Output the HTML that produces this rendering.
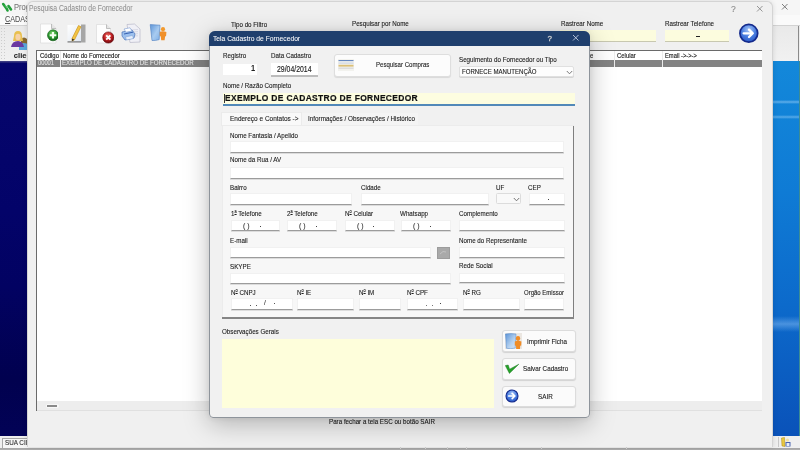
<!DOCTYPE html><html><head><meta charset="utf-8"><style>
*{box-sizing:border-box;margin:0;padding:0}
html,body{width:800px;height:450px;overflow:hidden}
body{position:relative;background:#f0f0f0;font-family:"Liberation Sans",sans-serif}
.a{position:absolute}
.t{position:absolute;white-space:nowrap;filter:grayscale(1)}
</style></head><body>
<div class="a" style="left:0px;top:0px;width:800.00px;height:15.00px;background:#f6f6f6"></div>
<div class="a" style="left:0px;top:15px;width:800.00px;height:10.00px;background:#fafafa"></div>
<div class="a" style="left:0px;top:25px;width:800.00px;height:1.00px;background:#d2d2d2"></div>
<div class="a" style="left:0px;top:26px;width:800.00px;height:35.00px;background:linear-gradient(#e9e9e9,#f1f1f1)"></div>
<div class="a" style="left:798px;top:26px;width:1.00px;height:35.00px;background:#8a8a8a"></div>
<div class="a" style="left:0px;top:61px;width:30.00px;height:375.00px;background:linear-gradient(180deg,#4a4a86 0px,#06066c 2.5px,#030369 40%,#020262 60%,#01014f 85%,#020256)"></div>
<div class="a" style="left:773px;top:61px;width:26.00px;height:375.00px;background:linear-gradient(180deg,#1388da 0%,#0f7bd5 35%,#0c6acb 65%,#0a52b9 100%)"></div>
<div class="a" style="left:773px;top:100px;width:26.00px;height:4.00px;background:linear-gradient(180deg,rgba(255,255,255,0),rgba(170,215,250,.5),rgba(255,255,255,0))"></div>
<div class="a" style="left:773px;top:115px;width:26.00px;height:4.00px;background:linear-gradient(180deg,rgba(255,255,255,0),rgba(170,215,250,.45),rgba(255,255,255,0))"></div>
<div class="a" style="left:773px;top:316px;width:26.00px;height:16.00px;background:linear-gradient(180deg,rgba(255,255,255,0),rgba(150,200,250,.45),rgba(255,255,255,0))"></div>
<div class="a" style="left:799px;top:61px;width:1.00px;height:375.00px;background:#3b8c95"></div>
<div class="a" style="left:0px;top:436px;width:800.00px;height:11.00px;background:#efefef"></div>
<div class="a" style="left:2px;top:438px;width:26.00px;height:10.00px;background:#f6f6f6;border-left:1px solid #a8a8a8;border-top:1px solid #a8a8a8"></div>
<div class="t" style="left:4.6px;top:437.71px;font-size:7.6px;line-height:9.12px;color:#333;font-weight:400;-webkit-text-stroke:0.12px #333;transform:scaleX(0.83);transform-origin:0 0;">SUA CID</div>
<div class="a" style="left:778px;top:437px;width:1.00px;height:10.00px;background:#c8c8c8"></div>
<div class="a" style="left:0px;top:447.8px;width:800.00px;height:2.20px;background:linear-gradient(#a4a4a4,#b0b0b0)"></div>
<div class="a" style="left:400px;top:447px;width:1.00px;height:2.00px;background:#d4d4d4"></div>
<div class="a" style="left:425px;top:447px;width:1.00px;height:2.00px;background:#d4d4d4"></div>
<div class="a" style="left:447px;top:447px;width:1.00px;height:2.00px;background:#d4d4d4"></div>
<div class="a" style="left:466px;top:447px;width:1.00px;height:2.00px;background:#d4d4d4"></div>
<div class="a" style="left:509px;top:447px;width:1.00px;height:2.00px;background:#d4d4d4"></div>
<div class="a" style="left:541px;top:447px;width:1.00px;height:2.00px;background:#d4d4d4"></div>
<div class="a" style="left:626px;top:447px;width:1.00px;height:2.00px;background:#d4d4d4"></div>
<svg class="a" style="left:781px;top:437px" width="10" height="10" viewBox="0 0 10 10"><path d="M0.5 1 L3.5 0.5 L4 9.5 L1 9 Z" fill="#e8c840" stroke="#b08a10" stroke-width=".5"/><circle cx="6.5" cy="3" r="1.5" fill="#f2e0a0"/><path d="M4.5 5 H9.5 V9.5 H4.5 Z" fill="#4a64b0"/><path d="M5.5 6 H8.5 V9 H5.5 Z" fill="#e8eef8"/></svg>
<svg class="a" style="left:1px;top:1px" width="12" height="12" viewBox="0 0 12 12"><path d="M2.2 3 L5.5 7.5 L6.5 9.5 M7.5 5 L10 8.5" stroke="#22a03a" stroke-width="2.6" fill="none" stroke-linecap="round"/><path d="M4 4 L6 7" stroke="#6ad07a" stroke-width=".8"/></svg>
<div class="t" style="left:14px;top:1.86px;font-size:8.6px;line-height:10.32px;color:#70707c;font-weight:400;-webkit-text-stroke:0.05px #70707c;transform:scaleX(0.88);transform-origin:0 0;">Prog</div>
<div class="t" style="left:4.5px;top:14.25px;font-size:8.4px;line-height:10.08px;color:#505050;font-weight:400;-webkit-text-stroke:0.05px #505050;transform:scaleX(0.86);transform-origin:0 0;"><u>C</u>ADAS</div>
<svg class="a" style="left:781.25px;top:2.55px" width="7.5" height="7.5" viewBox="0 0 7.5 7.5"><path d="M1 1 L6.5 6.5 M6.5 1 L1 6.5" stroke="#6f6f6f" stroke-width="0.9"/></svg>
<div class="a" style="left:1px;top:28px;width:1.00px;height:1.00px;background:#cdcdcd"></div>
<div class="a" style="left:4px;top:28px;width:1.00px;height:1.00px;background:#cdcdcd"></div>
<div class="a" style="left:1px;top:31px;width:1.00px;height:1.00px;background:#cdcdcd"></div>
<div class="a" style="left:4px;top:31px;width:1.00px;height:1.00px;background:#cdcdcd"></div>
<div class="a" style="left:1px;top:34px;width:1.00px;height:1.00px;background:#cdcdcd"></div>
<div class="a" style="left:4px;top:34px;width:1.00px;height:1.00px;background:#cdcdcd"></div>
<div class="a" style="left:1px;top:37px;width:1.00px;height:1.00px;background:#cdcdcd"></div>
<div class="a" style="left:4px;top:37px;width:1.00px;height:1.00px;background:#cdcdcd"></div>
<div class="a" style="left:1px;top:40px;width:1.00px;height:1.00px;background:#cdcdcd"></div>
<div class="a" style="left:4px;top:40px;width:1.00px;height:1.00px;background:#cdcdcd"></div>
<div class="a" style="left:1px;top:43px;width:1.00px;height:1.00px;background:#cdcdcd"></div>
<div class="a" style="left:4px;top:43px;width:1.00px;height:1.00px;background:#cdcdcd"></div>
<div class="a" style="left:1px;top:46px;width:1.00px;height:1.00px;background:#cdcdcd"></div>
<div class="a" style="left:4px;top:46px;width:1.00px;height:1.00px;background:#cdcdcd"></div>
<div class="a" style="left:1px;top:49px;width:1.00px;height:1.00px;background:#cdcdcd"></div>
<div class="a" style="left:4px;top:49px;width:1.00px;height:1.00px;background:#cdcdcd"></div>
<div class="a" style="left:1px;top:52px;width:1.00px;height:1.00px;background:#cdcdcd"></div>
<div class="a" style="left:4px;top:52px;width:1.00px;height:1.00px;background:#cdcdcd"></div>
<div class="a" style="left:1px;top:55px;width:1.00px;height:1.00px;background:#cdcdcd"></div>
<div class="a" style="left:4px;top:55px;width:1.00px;height:1.00px;background:#cdcdcd"></div>
<div class="a" style="left:1px;top:58px;width:1.00px;height:1.00px;background:#cdcdcd"></div>
<div class="a" style="left:4px;top:58px;width:1.00px;height:1.00px;background:#cdcdcd"></div>
<svg class="a" style="left:10px;top:30px" width="18" height="20" viewBox="0 0 18 20">
<path d="M11 9 Q14 6 17 9 L18 14 L11 14 Z" fill="#8a6a30"/>
<path d="M9 14 Q13 12 18 14 V20 H9 Z" fill="#5aa6dc"/>
<path d="M4 6 Q4 1 8 1 Q12 1 12 6 L13 11 L3 11 Z" fill="#e8c050"/>
<ellipse cx="8" cy="7" rx="2.6" ry="3.2" fill="#f6d2a8"/>
<path d="M1 17 Q2 11 8 11 Q13 11 14 17 Z" fill="#6a3aa0"/>
</svg>
<div class="t" style="left:13.8px;top:51.21px;font-size:7.6px;line-height:9.12px;color:#222;font-weight:700;-webkit-text-stroke:0.05px #222;">clien</div>
<div class="a" style="left:27px;top:1px;width:746.00px;height:446.00px;background:#f0f0f0;border:1px solid #d4d4d4;border-bottom:none;border-radius:6px 6px 0 0;box-shadow:0 0 5px rgba(0,0,0,.12)"></div>
<div class="t" style="left:29px;top:3.74px;font-size:8.3px;line-height:9.96px;color:#8e8e8e;font-weight:400;-webkit-text-stroke:0.05px #8e8e8e;transform:scaleX(0.82);transform-origin:0 0;">Pesquisa Cadastro de Fornecedor</div>
<div class="t" style="left:731px;top:3.68px;font-size:9px;line-height:10.8px;color:#8a8a8a;font-weight:400;-webkit-text-stroke:0.1px #8a8a8a;transform:scaleX(0.95);transform-origin:0 0;">?</div>
<svg class="a" style="left:756.25px;top:5.25px" width="7.5" height="7.5" viewBox="0 0 7.5 7.5"><path d="M1 1 L6.5 6.5 M6.5 1 L1 6.5" stroke="#8a8a8a" stroke-width="0.9"/></svg>
<div class="t" style="left:231px;top:19.92px;font-size:7.9px;line-height:9.48px;color:#1c1c1c;font-weight:400;-webkit-text-stroke:0.12px #1c1c1c;transform:scaleX(0.79);transform-origin:0 0;">Tipo do Filtro</div>
<div class="t" style="left:352px;top:18.92px;font-size:7.9px;line-height:9.48px;color:#1c1c1c;font-weight:400;-webkit-text-stroke:0.12px #1c1c1c;transform:scaleX(0.79);transform-origin:0 0;">Pesquisar por Nome</div>
<div class="t" style="left:560.5px;top:18.92px;font-size:7.9px;line-height:9.48px;color:#1c1c1c;font-weight:400;-webkit-text-stroke:0.12px #1c1c1c;transform:scaleX(0.79);transform-origin:0 0;">Rastrear Nome</div>
<div class="t" style="left:665px;top:18.92px;font-size:7.9px;line-height:9.48px;color:#1c1c1c;font-weight:400;-webkit-text-stroke:0.12px #1c1c1c;transform:scaleX(0.79);transform-origin:0 0;">Rastrear Telefone</div>
<div class="a" style="left:560px;top:30px;width:96.00px;height:12.00px;background:#fcfcde;border-bottom:1px solid #c8c8b0"></div>
<div class="a" style="left:665px;top:30px;width:64.00px;height:12.00px;background:#fcfcde;border-bottom:1px solid #c8c8b0"></div>
<div class="a" style="left:696px;top:36.2px;width:4.00px;height:1.20px;background:#222"></div>
<svg class="a" style="left:737.5px;top:22.5px" width="22" height="21" viewBox="0 0 22 21">
<defs><radialGradient id="g1" cx="50%" cy="30%" r="70%"><stop offset="0" stop-color="#a6c6f6"/><stop offset=".55" stop-color="#4a7ee0"/><stop offset="1" stop-color="#2a5ac8"/></radialGradient></defs>
<circle cx="10.8" cy="10.3" r="8.9" fill="url(#g1)" stroke="#142a8c" stroke-width="1.7"/>
<path d="M5.6 10.3 H14.6 M11 6.6 L14.8 10.3 L11 14" stroke="#fff" stroke-width="2.3" fill="none" stroke-linecap="round" stroke-linejoin="round"/>
</svg>
<div class="a" style="left:36px;top:50px;width:726.00px;height:361.00px;background:#fff;border-left:1px solid #6a6a6a;border-top:1px solid #6a6a6a"></div>
<div class="a" style="left:37px;top:60px;width:725.00px;height:7.00px;background:#838383"></div>
<div class="a" style="left:60px;top:51px;width:1.00px;height:16.00px;background:#ebebeb"></div>
<div class="a" style="left:614px;top:51px;width:1.00px;height:16.00px;background:#ebebeb"></div>
<div class="a" style="left:662px;top:51px;width:1.00px;height:16.00px;background:#ebebeb"></div>
<div class="t" style="left:40px;top:50.82px;font-size:7.8px;line-height:9.36px;color:#1c1c1c;font-weight:400;-webkit-text-stroke:0.16px #1c1c1c;transform:scaleX(0.77);transform-origin:0 0;">Código</div>
<div class="t" style="left:63px;top:50.82px;font-size:7.8px;line-height:9.36px;color:#1c1c1c;font-weight:400;-webkit-text-stroke:0.16px #1c1c1c;transform:scaleX(0.77);transform-origin:0 0;">Nome do Fornecedor</div>
<div class="t" style="left:616.8px;top:50.82px;font-size:7.8px;line-height:9.36px;color:#1c1c1c;font-weight:400;-webkit-text-stroke:0.16px #1c1c1c;transform:scaleX(0.76);transform-origin:0 0;">Celular</div>
<div class="t" style="left:664.5px;top:50.82px;font-size:7.8px;line-height:9.36px;color:#1c1c1c;font-weight:400;-webkit-text-stroke:0.16px #1c1c1c;transform:scaleX(0.74);transform-origin:0 0;">Email -&gt;-&gt;-&gt;</div>
<div class="t" style="left:38.2px;top:58.43px;font-size:8px;line-height:9.6px;color:#e6e6e6;font-weight:400;-webkit-text-stroke:0.08px #e6e6e6;transform:scaleX(0.72);transform-origin:0 0;">00001</div>
<div class="t" style="left:62px;top:58.43px;font-size:8px;line-height:9.6px;color:#e6e6e6;font-weight:400;-webkit-text-stroke:0.08px #e6e6e6;transform:scaleX(0.77);transform-origin:0 0;">EXEMPLO DE CADASTRO DE FORNECEDOR</div>
<div class="a" style="left:589px;top:51px;width:11.00px;height:9.00px;background:#fff"></div>
<div class="t" style="left:590px;top:50.82px;font-size:7.8px;line-height:9.36px;color:#1c1c1c;font-weight:400;-webkit-text-stroke:0.12px #1c1c1c;transform:scaleX(0.77);transform-origin:0 0;">e</div>
<div class="a" style="left:37px;top:400.5px;width:725.00px;height:10.00px;background:#ededed;border-bottom:1px solid #e0e0e0"></div>
<div class="a" style="left:45.5px;top:404px;width:13.00px;height:3.50px;background:#f8f8f8;border-radius:2px"></div>
<div class="a" style="left:47px;top:405px;width:10.00px;height:1.50px;background:#8a8a8a"></div>
<div class="t" style="left:329.3px;top:416.50px;font-size:7.5px;line-height:9.0px;color:#1c1c1c;font-weight:400;-webkit-text-stroke:0.12px #1c1c1c;transform:scaleX(0.83);transform-origin:0 0;">Para fechar a tela ESC ou botão SAIR</div>

<svg class="a" style="left:40px;top:23px" width="18" height="21" viewBox="0 0 18 21">
 <defs><radialGradient id="gg" cx="45%" cy="35%" r="60%"><stop offset="0" stop-color="#8fdc7a"/><stop offset=".6" stop-color="#2f9a32"/><stop offset="1" stop-color="#126a18"/></radialGradient></defs>
 <path d="M0.5 1 H11.5 L16 5.5 V20 H0.5 Z" fill="#fdfdfd" stroke="#dadada" stroke-width=".7"/>
 <path d="M11.5 1 V5.5 H16" fill="#e4e4e4" stroke="#a8a8a8" stroke-width=".7"/>
 <circle cx="13" cy="12.3" r="5.5" fill="url(#gg)" stroke="#0f5a14" stroke-width=".6"/>
 <path d="M13 9 V15.6 M9.7 12.3 H16.3" stroke="#f4fff0" stroke-width="2.1"/>
</svg>
<svg class="a" style="left:67px;top:23.5px" width="19" height="19" viewBox="0 0 19 19">
 <defs><linearGradient id="pg" x1="0" y1="0" x2="1" y2="1"><stop offset="0" stop-color="#ffffff"/><stop offset="1" stop-color="#dfe6f0"/></linearGradient></defs>
 <path d="M0.5 1 H14 V18 H0.5 Z" fill="url(#pg)"/>
 <path d="M14 0.5 H18.5 V18.5 H14 Z" fill="#a6a6a6"/>
 <path d="M0.5 17.3 H14 V18.5 H0.5 Z" fill="#767676"/>
 <path d="M5 14.5 L11.5 1.5 L14 2.8 L7.5 15.8 L5 17 Z" fill="#f2c444" stroke="#c48a10" stroke-width=".6"/>
 <path d="M5 14.5 L7.5 15.8 L5 17 Z" fill="#333"/>
</svg>
<svg class="a" style="left:95.5px;top:23.5px" width="18" height="20" viewBox="0 0 18 20">
 <defs><radialGradient id="rg" cx="45%" cy="35%" r="60%"><stop offset="0" stop-color="#f07a70"/><stop offset=".6" stop-color="#c01e22"/><stop offset="1" stop-color="#7a0c10"/></radialGradient></defs>
 <path d="M0.5 0.5 H10.5 L14.5 4.5 V19 H0.5 Z" fill="#fdfdfd" stroke="#dadada" stroke-width=".7"/>
 <path d="M10.5 0.5 V4.5 H14.5" fill="#e4e4e4" stroke="#a8a8a8" stroke-width=".7"/>
 <circle cx="12.3" cy="13.5" r="5.6" fill="url(#rg)" stroke="#6a0a0e" stroke-width=".6"/>
 <path d="M10.2 11.4 L14.4 15.6 M14.4 11.4 L10.2 15.6" stroke="#fff" stroke-width="1.9"/>
</svg>
<svg class="a" style="left:121px;top:22.5px" width="20" height="20" viewBox="0 0 20 20">
 <path d="M6 1.5 L13.5 1 L19 6 V19 L9 19.5 Z" fill="#f0f0f6" stroke="#b8b8c8" stroke-width=".7"/>
 <path d="M10 7 L17 6.5 M10.5 9 L17 8.6 M11 11 L17 10.7 M11.5 13 L17 12.8" stroke="#c8c8d8" stroke-width=".6"/>
 <path d="M1 9 L11 7 L14 11 L13 15 L4 17 L1 13 Z" fill="#9cc0ee" stroke="#4a72b8" stroke-width=".7"/>
 <path d="M3 6 L9 4.8 L11 8 L5 9.2 Z" fill="#ffffff" stroke="#7a9ad0" stroke-width=".6"/>
 <path d="M4.5 14 L11.5 12.5 L12.5 15.5 L5.5 17 Z" fill="#e8f0fc" stroke="#7a9ad0" stroke-width=".5"/>
 <path d="M3 11 L12 9.2" stroke="#3a62b0" stroke-width="1"/>
</svg>
<svg class="a" style="left:149px;top:23px" width="19" height="19" viewBox="0 0 19 19">
 <defs><linearGradient id="dg" x1="0" y1="0" x2="1" y2="1"><stop offset="0" stop-color="#5f96d8"/><stop offset=".55" stop-color="#a8cbf0"/><stop offset="1" stop-color="#7eaee6"/></linearGradient></defs>
 <path d="M1.2 1.6 L11 2.2 L10.2 16.6 Q6.5 17.8 3 17.5 Z" fill="url(#dg)" stroke="#4a7cc0" stroke-width=".6"/>
 <circle cx="14" cy="6.2" r="2.1" fill="#f29a2e"/>
 <path d="M10.8 8.8 Q14 7.6 17.4 9 L17.1 13 L16.1 13.4 L15.6 17.2 L12.2 17.2 L11.8 13.4 L10.8 13 Z" fill="#f0902a"/>
</svg>

<div class="a" style="left:209.3px;top:31px;width:381.20px;height:387.00px;border-radius:6px 6px 4px 4px;box-shadow:0 6px 26px rgba(0,0,0,.26),0 0 6px rgba(0,0,0,.08)"></div>
<div class="a" style="left:209.3px;top:31px;width:381.20px;height:387.00px;background:#f1f1f1;border:1.5px solid #8e949b;border-radius:6px 6px 4px 4px;overflow:hidden"></div>
<div class="a" style="left:209.3px;top:31px;width:381.20px;height:14.50px;background:#1f3f6d;border-radius:6px 6px 0 0"></div>
<div class="t" style="left:212.8px;top:34.60px;font-size:7.4px;line-height:8.88px;color:#fff;font-weight:400;-webkit-text-stroke:0.05px #fff;transform:scaleX(0.91);transform-origin:0 0;">Tela Cadastro de Fornecedor</div>
<div class="t" style="left:547.5px;top:34.43px;font-size:8px;line-height:9.6px;color:#c8d4e4;font-weight:400;-webkit-text-stroke:0.3px #c8d4e4;">?</div>
<svg class="a" style="left:572.25px;top:34.45px" width="7.5" height="7.5" viewBox="0 0 7.5 7.5"><path d="M1 1 L6.5 6.5 M6.5 1 L1 6.5" stroke="#c4d0e2" stroke-width="0.9"/></svg>
<div class="t" style="left:223px;top:51.27px;font-size:7.9px;line-height:9.48px;color:#1c1c1c;font-weight:400;-webkit-text-stroke:0.12px #1c1c1c;transform:scaleX(0.79);transform-origin:0 0;">Registro</div>
<div class="a" style="left:223px;top:63.6px;width:33.50px;height:11.90px;background:#fff"></div>
<div class="t" style="left:251px;top:64.04px;font-size:8.2px;line-height:9.84px;color:#222;font-weight:700;transform:scaleX(0.9);transform-origin:0 0;">1</div>
<div class="t" style="left:270.5px;top:51.27px;font-size:7.9px;line-height:9.48px;color:#1c1c1c;font-weight:400;-webkit-text-stroke:0.12px #1c1c1c;transform:scaleX(0.79);transform-origin:0 0;">Data Cadastro</div>
<div class="a" style="left:270.6px;top:63.4px;width:47.70px;height:11.60px;background:#fff"></div>
<div class="a" style="left:270.6px;top:75px;width:47.70px;height:1.60px;background:#bcbcbc"></div>
<div class="t" style="left:277.2px;top:63.95px;font-size:8.5px;line-height:10.2px;color:#222;font-weight:400;-webkit-text-stroke:0.15px #222;transform:scaleX(0.81);transform-origin:0 0;">29/04/2014</div>
<div class="a" style="left:333.7px;top:53.8px;width:117.70px;height:23.20px;background:#fcfcfc;border:1px solid #dedede;border-radius:3px;box-shadow:0 1px 1px rgba(0,0,0,.1)"></div>
<svg class="a" style="left:337.7px;top:59px" width="16" height="12" viewBox="0 0 16 12"><rect x="0" y="0" width="16" height="12" fill="#f2f2ee"/><rect x="0.5" y="1" width="15" height="1.1" fill="#6688c0"/><rect x="0.5" y="3.5" width="15" height="1.2" fill="#d0d8e6"/><rect x="0.5" y="5.8" width="15" height="1.8" fill="#dcc078"/><rect x="0.5" y="8.6" width="15" height="1.2" fill="#d8d8d8"/></svg>
<div class="t" style="left:375.6px;top:60.32px;font-size:7.9px;line-height:9.48px;color:#1c1c1c;font-weight:400;-webkit-text-stroke:0.12px #1c1c1c;transform:scaleX(0.77);transform-origin:0 0;">Pesquisar Compras</div>
<div class="t" style="left:459.3px;top:55.12px;font-size:7.9px;line-height:9.48px;color:#1c1c1c;font-weight:400;-webkit-text-stroke:0.12px #1c1c1c;transform:scaleX(0.79);transform-origin:0 0;">Seguimento do Fornecedor ou Tipo</div>
<div class="a" style="left:459px;top:65.6px;width:115.00px;height:11.90px;background:#fdfdfd;border:1px solid #e0e0e0;border-radius:2px;box-shadow:0 1px 0 #d4d4d4"></div>
<div class="t" style="left:461.5px;top:67.11px;font-size:7.6px;line-height:9.12px;color:#222;font-weight:400;-webkit-text-stroke:0.12px #222;transform:scaleX(0.8);transform-origin:0 0;">FORNECE MANUTENÇÃO</div>
<svg class="a" style="left:566px;top:69.5px" width="7" height="5" viewBox="0 0 7 5"><path d="M.8 1 L3.5 3.8 L6.2 1" stroke="#6a6a6a" stroke-width=".9" fill="none"/></svg>
<div class="t" style="left:223px;top:81.32px;font-size:7.9px;line-height:9.48px;color:#1c1c1c;font-weight:400;-webkit-text-stroke:0.12px #1c1c1c;transform:scaleX(0.79);transform-origin:0 0;">Nome / Razão Completo</div>
<div class="a" style="left:222.5px;top:92.5px;width:352.00px;height:13.50px;background:#fdfde0"></div>
<div class="a" style="left:222.5px;top:104px;width:352.00px;height:2.00px;background:#5289b9"></div>
<div class="a" style="left:224px;top:94px;width:1.00px;height:9.00px;background:#333"></div>
<div class="t" style="left:224.6px;top:92.31px;font-size:9.6px;line-height:11.52px;color:#111;font-weight:700;-webkit-text-stroke:0.2px #111;transform:scaleX(0.88);transform-origin:0 0;letter-spacing:.38px;">EXEMPLO DE CADASTRO DE FORNECEDOR</div>
<div class="a" style="left:221px;top:112px;width:81.00px;height:13.50px;background:#f9f9f9;border:1px solid #ebebeb;border-bottom:none"></div>
<div class="a" style="left:302px;top:113px;width:115.50px;height:12.50px;background:#f4f4f4"></div>
<div class="t" style="left:230px;top:113.52px;font-size:7.9px;line-height:9.48px;color:#1c1c1c;font-weight:400;-webkit-text-stroke:0.12px #1c1c1c;transform:scaleX(0.82);transform-origin:0 0;">Endereço e Contatos -&gt;</div>
<div class="t" style="left:307.8px;top:114.42px;font-size:7.9px;line-height:9.48px;color:#1c1c1c;font-weight:400;-webkit-text-stroke:0.12px #1c1c1c;transform:scaleX(0.8);transform-origin:0 0;">Informações / Observações / Histórico</div>
<div class="a" style="left:222px;top:125px;width:352.00px;height:194.00px;background:#f7f7f7;border-left:1px solid #ececec;border-top:1px solid #ececec"></div>
<div class="a" style="left:572.6px;top:125.5px;width:1.40px;height:193.30px;background:#7f7f7f"></div>
<div class="a" style="left:222px;top:317.2px;width:352.00px;height:1.60px;background:#858585"></div>
<div class="t" style="left:230.4px;top:130.82px;font-size:7.9px;line-height:9.48px;color:#1c1c1c;font-weight:400;-webkit-text-stroke:0.12px #1c1c1c;transform:scaleX(0.79);transform-origin:0 0;">Nome Fantasia / Apelido</div>
<div class="a" style="left:230.4px;top:141.3px;width:333.90px;height:11.50px;background:#fff;border:1px solid #f1f1f1;border-bottom:1px solid #9c9c9c;box-shadow:0 1px 0 #dcdcdc;"></div>
<div class="t" style="left:230.4px;top:155.32px;font-size:7.9px;line-height:9.48px;color:#1c1c1c;font-weight:400;-webkit-text-stroke:0.12px #1c1c1c;transform:scaleX(0.79);transform-origin:0 0;">Nome da Rua / AV</div>
<div class="a" style="left:230.4px;top:167px;width:333.90px;height:11.80px;background:#fff;border:1px solid #f1f1f1;border-bottom:1px solid #9c9c9c;box-shadow:0 1px 0 #dcdcdc;"></div>
<div class="t" style="left:230.4px;top:182.52px;font-size:7.9px;line-height:9.48px;color:#1c1c1c;font-weight:400;-webkit-text-stroke:0.12px #1c1c1c;transform:scaleX(0.79);transform-origin:0 0;">Bairro</div>
<div class="a" style="left:230.4px;top:193px;width:121.60px;height:11.80px;background:#fff;border:1px solid #f1f1f1;border-bottom:1px solid #9c9c9c;box-shadow:0 1px 0 #dcdcdc;"></div>
<div class="t" style="left:361px;top:182.52px;font-size:7.9px;line-height:9.48px;color:#1c1c1c;font-weight:400;-webkit-text-stroke:0.12px #1c1c1c;transform:scaleX(0.79);transform-origin:0 0;">Cidade</div>
<div class="a" style="left:361px;top:193px;width:128.00px;height:11.80px;background:#fff;border:1px solid #f1f1f1;border-bottom:1px solid #9c9c9c;box-shadow:0 1px 0 #dcdcdc;"></div>
<div class="t" style="left:496px;top:182.52px;font-size:7.9px;line-height:9.48px;color:#1c1c1c;font-weight:400;-webkit-text-stroke:0.12px #1c1c1c;transform:scaleX(0.79);transform-origin:0 0;">UF</div>
<div class="a" style="left:495.5px;top:192.5px;width:25.00px;height:11.50px;background:#f9f9f9;border:1px solid #dcdcdc;border-radius:1.5px"></div>
<svg class="a" style="left:513px;top:196.5px" width="7" height="5" viewBox="0 0 7 5"><path d="M.8 1 L3.5 3.8 L6.2 1" stroke="#666" stroke-width=".9" fill="none"/></svg>
<div class="t" style="left:527.5px;top:182.52px;font-size:7.9px;line-height:9.48px;color:#1c1c1c;font-weight:400;-webkit-text-stroke:0.12px #1c1c1c;transform:scaleX(0.79);transform-origin:0 0;">CEP</div>
<div class="a" style="left:529px;top:193px;width:35.50px;height:11.50px;background:#fff;border:1px solid #f1f1f1;border-bottom:1px solid #9c9c9c;box-shadow:0 1px 0 #dcdcdc;"></div>
<div class="a" style="left:548px;top:198.5px;width:1.00px;height:1.00px;background:#444"></div>
<div class="t" style="left:230.9px;top:208.62px;font-size:7.9px;line-height:9.48px;color:#1c1c1c;font-weight:400;-webkit-text-stroke:0.12px #1c1c1c;transform:scaleX(0.79);transform-origin:0 0;">1<span style="font-size:62%;position:relative;top:-2.3px;text-decoration:underline">a</span> Telefone</div>
<div class="a" style="left:230.9px;top:219.9px;width:49.10px;height:11.50px;background:#fff;border:1px solid #f1f1f1;border-bottom:1px solid #9c9c9c;box-shadow:0 1px 0 #dcdcdc;"></div>
<div class="t" style="left:287px;top:208.62px;font-size:7.9px;line-height:9.48px;color:#1c1c1c;font-weight:400;-webkit-text-stroke:0.12px #1c1c1c;transform:scaleX(0.79);transform-origin:0 0;">2<span style="font-size:62%;position:relative;top:-2.3px;text-decoration:underline">a</span> Telefone</div>
<div class="a" style="left:287px;top:219.9px;width:50.00px;height:11.50px;background:#fff;border:1px solid #f1f1f1;border-bottom:1px solid #9c9c9c;box-shadow:0 1px 0 #dcdcdc;"></div>
<div class="t" style="left:344.5px;top:208.62px;font-size:7.9px;line-height:9.48px;color:#1c1c1c;font-weight:400;-webkit-text-stroke:0.12px #1c1c1c;transform:scaleX(0.79);transform-origin:0 0;">N<span style="font-size:62%;position:relative;top:-2.3px;text-decoration:underline">o</span> Celular</div>
<div class="a" style="left:344.5px;top:219.9px;width:50.50px;height:11.50px;background:#fff;border:1px solid #f1f1f1;border-bottom:1px solid #9c9c9c;box-shadow:0 1px 0 #dcdcdc;"></div>
<div class="t" style="left:400px;top:208.62px;font-size:7.9px;line-height:9.48px;color:#1c1c1c;font-weight:400;-webkit-text-stroke:0.12px #1c1c1c;transform:scaleX(0.79);transform-origin:0 0;">Whatsapp</div>
<div class="a" style="left:401px;top:219.9px;width:50.00px;height:11.50px;background:#fff;border:1px solid #f1f1f1;border-bottom:1px solid #9c9c9c;box-shadow:0 1px 0 #dcdcdc;"></div>
<div class="t" style="left:458.6px;top:208.62px;font-size:7.9px;line-height:9.48px;color:#1c1c1c;font-weight:400;-webkit-text-stroke:0.12px #1c1c1c;transform:scaleX(0.79);transform-origin:0 0;">Complemento</div>
<div class="a" style="left:458.6px;top:219.9px;width:106.00px;height:11.50px;background:#fff;border:1px solid #f1f1f1;border-bottom:1px solid #9c9c9c;box-shadow:0 1px 0 #dcdcdc;"></div>
<div class="t" style="left:242.9px;top:220.81px;font-size:7.6px;line-height:9.12px;color:#333;font-weight:400;-webkit-text-stroke:0.1px #333;transform:scaleX(0.9);transform-origin:0 0;">(&nbsp;)</div>
<div class="a" style="left:259.7px;top:225.6px;width:1.00px;height:1.00px;background:#444"></div>
<div class="t" style="left:299px;top:220.81px;font-size:7.6px;line-height:9.12px;color:#333;font-weight:400;-webkit-text-stroke:0.1px #333;transform:scaleX(0.9);transform-origin:0 0;">(&nbsp;)</div>
<div class="a" style="left:315.8px;top:225.6px;width:1.00px;height:1.00px;background:#444"></div>
<div class="t" style="left:356.5px;top:220.81px;font-size:7.6px;line-height:9.12px;color:#333;font-weight:400;-webkit-text-stroke:0.1px #333;transform:scaleX(0.9);transform-origin:0 0;">(&nbsp;)</div>
<div class="a" style="left:373.3px;top:225.6px;width:1.00px;height:1.00px;background:#444"></div>
<div class="t" style="left:413px;top:220.81px;font-size:7.6px;line-height:9.12px;color:#333;font-weight:400;-webkit-text-stroke:0.1px #333;transform:scaleX(0.9);transform-origin:0 0;">(&nbsp;)</div>
<div class="a" style="left:429.8px;top:225.6px;width:1.00px;height:1.00px;background:#444"></div>
<div class="t" style="left:230.4px;top:235.82px;font-size:7.9px;line-height:9.48px;color:#1c1c1c;font-weight:400;-webkit-text-stroke:0.12px #1c1c1c;transform:scaleX(0.79);transform-origin:0 0;">E-mail</div>
<div class="a" style="left:230.4px;top:247px;width:200.60px;height:11.20px;background:#fff;border:1px solid #f1f1f1;border-bottom:1px solid #9c9c9c;box-shadow:0 1px 0 #dcdcdc;"></div>
<div class="a" style="left:437px;top:247px;width:12.50px;height:11.50px;background:#a9a9a9;border:1px solid #9c9c9c"></div>
<svg class="a" style="left:439px;top:249px" width="8" height="7" viewBox="0 0 8 7"><path d="M1 5 Q4 1 7 3" stroke="#c8c8c8" stroke-width=".8" fill="none"/></svg>
<div class="t" style="left:458.75px;top:236.12px;font-size:7.9px;line-height:9.48px;color:#1c1c1c;font-weight:400;-webkit-text-stroke:0.12px #1c1c1c;transform:scaleX(0.79);transform-origin:0 0;">Nome do Representante</div>
<div class="a" style="left:458.75px;top:247px;width:105.75px;height:11.20px;background:#fff;border:1px solid #f1f1f1;border-bottom:1px solid #9c9c9c;box-shadow:0 1px 0 #dcdcdc;"></div>
<div class="t" style="left:230.4px;top:261.52px;font-size:7.9px;line-height:9.48px;color:#1c1c1c;font-weight:400;-webkit-text-stroke:0.12px #1c1c1c;transform:scaleX(0.79);transform-origin:0 0;">SKYPE</div>
<div class="a" style="left:230.4px;top:273px;width:220.60px;height:10.80px;background:#fff;border:1px solid #f1f1f1;border-bottom:1px solid #9c9c9c;box-shadow:0 1px 0 #dcdcdc;"></div>
<div class="t" style="left:458.75px;top:261.42px;font-size:7.9px;line-height:9.48px;color:#1c1c1c;font-weight:400;-webkit-text-stroke:0.12px #1c1c1c;transform:scaleX(0.79);transform-origin:0 0;">Rede Social</div>
<div class="a" style="left:458.75px;top:272.5px;width:105.75px;height:10.90px;background:#fff;border:1px solid #f1f1f1;border-bottom:1px solid #9c9c9c;box-shadow:0 1px 0 #dcdcdc;"></div>
<div class="t" style="left:230.5px;top:287.52px;font-size:7.9px;line-height:9.48px;color:#1c1c1c;font-weight:400;-webkit-text-stroke:0.12px #1c1c1c;transform:scaleX(0.79);transform-origin:0 0;">N<span style="font-size:62%;position:relative;top:-2.3px;text-decoration:underline">o</span> CNPJ</div>
<div class="a" style="left:230.5px;top:298px;width:62.50px;height:11.50px;background:#fff;border:1px solid #f1f1f1;border-bottom:1px solid #9c9c9c;box-shadow:0 1px 0 #dcdcdc;"></div>
<div class="a" style="left:249.5px;top:305px;width:1.00px;height:1.00px;background:#555"></div>
<div class="a" style="left:256px;top:305px;width:1.00px;height:1.00px;background:#555"></div>
<div class="t" style="left:263.5px;top:298.80px;font-size:7.4px;line-height:8.88px;color:#333;font-weight:400;-webkit-text-stroke:0.1px #333;transform:scaleX(0.9);transform-origin:0 0;">/</div>
<div class="a" style="left:273.5px;top:303px;width:1.00px;height:1.00px;background:#555"></div>
<div class="t" style="left:297px;top:287.52px;font-size:7.9px;line-height:9.48px;color:#1c1c1c;font-weight:400;-webkit-text-stroke:0.12px #1c1c1c;transform:scaleX(0.79);transform-origin:0 0;">N<span style="font-size:62%;position:relative;top:-2.3px;text-decoration:underline">o</span> IE</div>
<div class="a" style="left:297px;top:298px;width:57.00px;height:11.50px;background:#fff;border:1px solid #f1f1f1;border-bottom:1px solid #9c9c9c;box-shadow:0 1px 0 #dcdcdc;"></div>
<div class="t" style="left:359px;top:287.52px;font-size:7.9px;line-height:9.48px;color:#1c1c1c;font-weight:400;-webkit-text-stroke:0.12px #1c1c1c;transform:scaleX(0.79);transform-origin:0 0;">N<span style="font-size:62%;position:relative;top:-2.3px;text-decoration:underline">o</span> IM</div>
<div class="a" style="left:359px;top:298px;width:42.40px;height:11.50px;background:#fff;border:1px solid #f1f1f1;border-bottom:1px solid #9c9c9c;box-shadow:0 1px 0 #dcdcdc;"></div>
<div class="t" style="left:407px;top:287.52px;font-size:7.9px;line-height:9.48px;color:#1c1c1c;font-weight:400;-webkit-text-stroke:0.12px #1c1c1c;transform:scaleX(0.79);transform-origin:0 0;">N<span style="font-size:62%;position:relative;top:-2.3px;text-decoration:underline">o</span> CPF</div>
<div class="a" style="left:407px;top:298px;width:50.50px;height:11.50px;background:#fff;border:1px solid #f1f1f1;border-bottom:1px solid #9c9c9c;box-shadow:0 1px 0 #dcdcdc;"></div>
<div class="a" style="left:425.5px;top:305px;width:1.00px;height:1.00px;background:#777"></div>
<div class="a" style="left:432.3px;top:305px;width:1.00px;height:1.00px;background:#777"></div>
<div class="a" style="left:440px;top:303px;width:1.00px;height:1.00px;background:#444"></div>
<div class="t" style="left:462.8px;top:287.52px;font-size:7.9px;line-height:9.48px;color:#1c1c1c;font-weight:400;-webkit-text-stroke:0.12px #1c1c1c;transform:scaleX(0.79);transform-origin:0 0;">N<span style="font-size:62%;position:relative;top:-2.3px;text-decoration:underline">o</span> RG</div>
<div class="a" style="left:463px;top:298px;width:56.70px;height:11.50px;background:#fff;border:1px solid #f1f1f1;border-bottom:1px solid #9c9c9c;box-shadow:0 1px 0 #dcdcdc;"></div>
<div class="t" style="left:524px;top:287.52px;font-size:7.9px;line-height:9.48px;color:#1c1c1c;font-weight:400;-webkit-text-stroke:0.12px #1c1c1c;transform:scaleX(0.76);transform-origin:0 0;">Orgão Emissor</div>
<div class="a" style="left:524px;top:298px;width:40.30px;height:11.50px;background:#fff;border:1px solid #f1f1f1;border-bottom:1px solid #9c9c9c;box-shadow:0 1px 0 #dcdcdc;"></div>
<div class="t" style="left:222px;top:326.52px;font-size:7.9px;line-height:9.48px;color:#1c1c1c;font-weight:400;-webkit-text-stroke:0.12px #1c1c1c;transform:scaleX(0.79);transform-origin:0 0;">Observações Gerais</div>
<div class="a" style="left:221.5px;top:338.5px;width:272.50px;height:69.50px;background:#fefedb"></div>
<div class="a" style="left:502.2px;top:330px;width:73.40px;height:22.20px;background:#fbfbfb;border:1px solid #dcdcdc;border-radius:3px;box-shadow:0 1px 1px rgba(0,0,0,.13)"></div>
<div class="t" style="left:526.7px;top:336.70px;font-size:7.5px;line-height:9.0px;color:#1c1c1c;font-weight:400;-webkit-text-stroke:0.12px #1c1c1c;transform:scaleX(0.84);transform-origin:0 0;">Imprimir Ficha</div>
<div class="a" style="left:502.2px;top:357.8px;width:73.40px;height:21.80px;background:#fbfbfb;border:1px solid #dcdcdc;border-radius:3px;box-shadow:0 1px 1px rgba(0,0,0,.13)"></div>
<div class="t" style="left:523px;top:364.30px;font-size:7.5px;line-height:9.0px;color:#1c1c1c;font-weight:400;-webkit-text-stroke:0.12px #1c1c1c;transform:scaleX(0.84);transform-origin:0 0;">Salvar Cadastro</div>
<div class="a" style="left:502.2px;top:385.6px;width:73.40px;height:21.70px;background:#fbfbfb;border:1px solid #dcdcdc;border-radius:3px;box-shadow:0 1px 1px rgba(0,0,0,.13)"></div>
<div class="t" style="left:537.8px;top:392.05px;font-size:7.5px;line-height:9.0px;color:#1c1c1c;font-weight:400;-webkit-text-stroke:0.12px #1c1c1c;transform:scaleX(0.84);transform-origin:0 0;">SAIR</div>
<svg class="a" style="left:505px;top:332.5px" width="17" height="16.5" viewBox="0 0 17 16.5"><defs><linearGradient id="dg2" x1="0" y1="0" x2="1" y2="1"><stop offset="0" stop-color="#5d95d8"/><stop offset=".6" stop-color="#b6d2f0"/><stop offset="1" stop-color="#d8e6f6"/></linearGradient></defs><rect width="17" height="16.5" fill="#ebe7e2"/><path d="M0.5 1 Q6 0.2 11 1 L10.2 15 Q5.5 16.3 1.5 15.3 Z" fill="url(#dg2)" stroke="#4f86cc" stroke-width=".5"/><ellipse cx="13" cy="5.5" rx="2.2" ry="2.4" fill="#f08c26"/><path d="M9.8 8.5 Q13 7 16.4 8.5 L16.2 12.5 L15.2 12.8 L15 16 L11.2 16 L11 12.8 L9.8 12.5 Z" fill="#f08c26"/></svg>
<svg class="a" style="left:504.5px;top:362.5px" width="15" height="12" viewBox="0 0 15 12"><path d="M0.3 2.6 L3.2 2 L4.6 6.2 L13.8 1.2 L4.4 10.4 Z" fill="#26a22a" stroke="#15721a" stroke-width=".45"/></svg>
<svg class="a" style="left:504.5px;top:389px" width="14" height="14" viewBox="0 0 14 14"><defs><radialGradient id="g2" cx="50%" cy="30%" r="70%"><stop offset="0" stop-color="#a6c6f6"/><stop offset=".55" stop-color="#4a7ee0"/><stop offset="1" stop-color="#2a5ac8"/></radialGradient></defs><circle cx="7" cy="7" r="6" fill="url(#g2)" stroke="#142a8c" stroke-width="1.1"/><path d="M3.6 7 H9.6 M7.2 4.4 L9.9 7 L7.2 9.6" stroke="#fff" stroke-width="1.6" fill="none" stroke-linecap="round" stroke-linejoin="round"/></svg>
</body></html>
